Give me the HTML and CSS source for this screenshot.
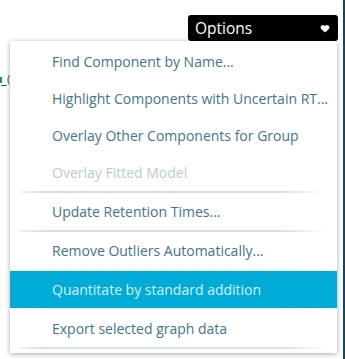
FILE: index.html
```html
<!DOCTYPE html>
<html>
<head>
<meta charset="utf-8">
<link rel="stylesheet" href="styles.css">
</head>
<body>
<div class="screen">
  <div class="snippet"><span class="blue-mark"></span><span class="under">_</span><span class="paren">(</span></div>

  <div class="dropdown">
    <div class="opt-btn">
      <span class="opt-label">Options</span>
      <svg class="heart" width="10" height="8" viewBox="0 0 10 8"><path d="M5 7.6 L1.1 3.9 A2.1 2.1 0 0 1 5 1.2 A2.1 2.1 0 0 1 8.9 3.9 Z" fill="#fff"/></svg>
    </div>
  </div>

  <div class="menu">
    <div class="item">Find Component by Name...</div>
    <div class="item">Highlight Components with Uncertain RT...</div>
    <div class="item">Overlay Other Components for Group</div>
    <div class="item disabled">Overlay Fitted Model</div>
    <div class="sep"></div>
    <div class="item">Update Retention Times...</div>
    <div class="sep"></div>
    <div class="item">Remove Outliers Automatically...</div>
    <div class="sep faint"></div>
    <div class="item active">Quantitate by standard addition</div>
    <div class="sep faint"></div>
    <div class="item">Export selected graph data</div>
    <div class="sep"></div>
  </div>
</div>
</body>
</html>
```

FILE: styles.css
```css
html, body {
  margin: 0;
  padding: 0;
  background: #fff;
}

.screen {
  position: relative;
  width: 343px;
  height: 359px;
  border-right: 2px solid #0e4a66;
  overflow: hidden;
  background: #fff;
  font-family: "Open Sans", "Noto Sans", sans-serif;
}

.snippet {
  padding-top: 74px;
  display: flex;
  align-items: flex-start;
  font-family: "DejaVu Sans", sans-serif;
  font-size: 11px;
  line-height: 12px;
}

.blue-mark {
  display: block;
  width: 2px;
  height: 6px;
  margin-top: 3px;
  background: #1a7fd6;
}

.under {
  color: #111;
  margin-left: -1px;
}

.paren {
  color: #5a4a8a;
  margin-left: 0;
}

.dropdown {
  position: absolute;
  left: 188px;
  top: 15px;
  width: 150px;
}

.opt-btn {
  height: 26px;
  background: #000;
  border-radius: 3px;
  display: flex;
  align-items: center;
  justify-content: space-between;
  padding: 0 8px 0 7px;
  color: #fff;
}

.opt-label {
  font-size: 15.5px;
  line-height: 26px;
}

.heart {
  display: block;
  margin-top: 1px;
}

.menu {
  position: absolute;
  left: 10px;
  top: 41px;
  width: 327px;
  padding: 2px 0 4px;
  background: #fff;
  box-shadow: 0 1px 5px rgba(0, 0, 0, 0.35);
}

.item {
  height: 37px;
  display: flex;
  align-items: center;
  padding-left: 42px;
  font-size: 14px;
  color: #41758a;
  white-space: nowrap;
}

.item.disabled {
  color: #b8ccd4;
}

.item.active {
  background: #00abd7;
  color: #d6eff8;
}

.sep {
  height: 2px;
  margin: 0 10px;
  background: linear-gradient(to right, rgba(205, 224, 221, 0.4), #d2e3e0 8%, #d2e3e0 85%, rgba(205, 224, 221, 0));
}

.sep.faint {
  opacity: 0.45;
}
```
